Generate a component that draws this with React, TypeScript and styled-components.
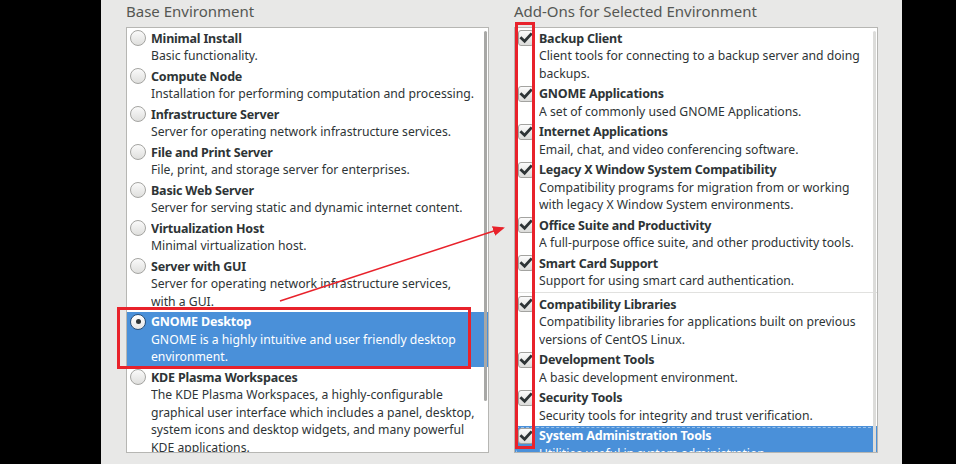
import React from 'react';
import styled, {createGlobalStyle} from 'styled-components';

const GlobalStyle = createGlobalStyle`
  html, body {
    margin: 0;
    padding: 0;
    background: #000;
  }
  #root {
    width: 956px;
    height: 464px;
  }
`

type Entry = {
    name: string
    lines: string[]
    selected?: boolean
    separatorBefore?: boolean
}

const environments: Entry[] = [
    {name: 'Minimal Install', lines: ['Basic functionality.']},
    {name: 'Compute Node', lines: ['Installation for performing computation and processing.']},
    {name: 'Infrastructure Server', lines: ['Server for operating network infrastructure services.']},
    {name: 'File and Print Server', lines: ['File, print, and storage server for enterprises.']},
    {name: 'Basic Web Server', lines: ['Server for serving static and dynamic internet content.']},
    {name: 'Virtualization Host', lines: ['Minimal virtualization host.']},
    {name: 'Server with GUI', lines: ['Server for operating network infrastructure services,', 'with a GUI.']},
    {
        name: 'GNOME Desktop',
        lines: ['GNOME is a highly intuitive and user friendly desktop', 'environment.'],
        selected: true
    },
    {
        name: 'KDE Plasma Workspaces',
        lines: [
            'The KDE Plasma Workspaces, a highly-configurable',
            'graphical user interface which includes a panel, desktop,',
            'system icons and desktop widgets, and many powerful',
            'KDE applications.'
        ]
    },
]

const addons: Entry[] = [
    {name: 'Backup Client', lines: ['Client tools for connecting to a backup server and doing', 'backups.']},
    {name: 'GNOME Applications', lines: ['A set of commonly used GNOME Applications.']},
    {name: 'Internet Applications', lines: ['Email, chat, and video conferencing software.']},
    {
        name: 'Legacy X Window System Compatibility',
        lines: ['Compatibility programs for migration from or working', 'with legacy X Window System environments.']
    },
    {name: 'Office Suite and Productivity', lines: ['A full-purpose office suite, and other productivity tools.']},
    {name: 'Smart Card Support', lines: ['Support for using smart card authentication.']},
    {
        name: 'Compatibility Libraries',
        lines: ['Compatibility libraries for applications built on previous', 'versions of CentOS Linux.'],
        separatorBefore: true
    },
    {name: 'Development Tools', lines: ['A basic development environment.']},
    {name: 'Security Tools', lines: ['Security tools for integrity and trust verification.']},
    {name: 'System Administration Tools', lines: ['Utilities useful in system administration.'], selected: true},
]

export default function App() {
    return (
        <>
            <GlobalStyle/>
            <Screen>
                <Workspace>
                    <Column $width={363}>
                        <Heading>Base Environment</Heading>
                        <ListBox>
                            {environments.map(e => (
                                <Item key={e.name} $selected={e.selected}>
                                    <IconSlot>
                                        <Radio $checked={e.selected}/>
                                    </IconSlot>
                                    <ItemText>
                                        <ItemName>{e.name}</ItemName>
                                        {e.lines.map(l => <ItemLine key={l}>{l}</ItemLine>)}
                                    </ItemText>
                                </Item>
                            ))}
                            <Thumb $top={3} $height={370} $color="#a8a8a6"/>
                        </ListBox>
                    </Column>
                    <Column $width={364}>
                        <Heading>Add-Ons for Selected Environment</Heading>
                        <ListBox>
                            {addons.map(a => (
                                <React.Fragment key={a.name}>
                                    {a.separatorBefore && <Separator/>}
                                    <Item $selected={a.selected} $focused={a.selected}>
                                        <IconSlot>
                                            <CheckBox/>
                                        </IconSlot>
                                        <ItemText>
                                            <ItemName>{a.name}</ItemName>
                                            {a.lines.map(l => <ItemLine key={l}>{l}</ItemLine>)}
                                        </ItemText>
                                    </Item>
                                </React.Fragment>
                            ))}
                            <Thumb $top={3} $height={430} $color="#dcdcda"/>
                        </ListBox>
                    </Column>
                </Workspace>
                <Annotations width="956" height="464" viewBox="0 0 956 464">
                    <defs>
                        <marker id="head" markerWidth="12" markerHeight="10" refX="10" refY="5" orient="auto"
                                markerUnits="userSpaceOnUse">
                            <path d="M0,0 L12,5 L0,10 z" fill="#e8222b"/>
                        </marker>
                    </defs>
                    <rect x="118.5" y="308.5" width="351" height="59" fill="none" stroke="#e8222b" strokeWidth="3"/>
                    <rect x="516.5" y="23.5" width="17" height="424" fill="none" stroke="#e8222b" strokeWidth="3"/>
                    <line x1="280" y1="301" x2="503" y2="228" stroke="#e8222b" strokeWidth="1.5"
                          markerEnd="url(#head)"/>
                </Annotations>
            </Screen>
        </>
    )
}

function CheckBox() {
    return (
        <CheckFrame>
            <svg width="14" height="14" viewBox="0 0 14 14">
                <path d="M2.4 7.2 L5.6 10.3 L11.8 3.4" fill="none" stroke="#2e3436" strokeWidth="2.8"
                      strokeLinecap="square" strokeLinejoin="miter"/>
            </svg>
        </CheckFrame>
    )
}

const Screen = styled.div`
  position: relative;
  width: 956px;
  height: 464px;
  background: #000;
  display: flex;
  overflow: hidden;
  font-family: "Noto Sans", "DejaVu Sans", sans-serif;
`

const Workspace = styled.div`
  margin-left: 101px;
  width: 801px;
  box-sizing: border-box;
  height: 464px;
  background: #e8e8e7;
  padding: 0 24px 0 25px;
  display: flex;
  gap: 25px;
`

const Column = styled.div<{ $width: number }>`
  display: flex;
  flex-direction: column;
  flex: none;
  width: ${p => p.$width}px;
`

const Heading = styled.div`
  height: 27px;
  line-height: 22px;
  font-size: 15px;
  color: #555753;
`

const ListBox = styled.div`
  position: relative;
  height: 426px;
  box-sizing: border-box;
  border: 1px solid #b6b6b3;
  background: #fff;
  overflow: hidden;
`

const Item = styled.div<{ $selected?: boolean, $focused?: boolean }>`
  display: flex;
  gap: 5px;
  padding: 1.5px 0 1.5px 3px;
  background: ${p => p.$selected ? '#4a90d9' : 'transparent'};
  color: ${p => p.$selected ? '#ffffff' : '#2e3436'};
  outline: ${p => p.$focused ? '1px dashed rgba(255,255,255,0.45)' : 'none'};
  outline-offset: -2px;
`

const IconSlot = styled.div`
  flex: none;
  width: 16px;
  height: 17.5px;
  display: flex;
  align-items: center;
  justify-content: center;
`

const Radio = styled.span<{ $checked?: boolean }>`
  box-sizing: border-box;
  width: 16px;
  height: 16px;
  border-radius: 50%;
  border: 1px solid ${p => p.$checked ? '#2b4f77' : '#a4a4a1'};
  background: ${p => p.$checked ? 'linear-gradient(#ffffff, #e6e6e6)' : 'linear-gradient(#fafafa, #dfdfdd)'};
  display: flex;
  align-items: center;
  justify-content: center;

  &::after {
    content: '';
    display: ${p => p.$checked ? 'block' : 'none'};
    width: 5px;
    height: 5px;
    border-radius: 50%;
    background: #2e3436;
  }
`

const CheckFrame = styled.span`
  box-sizing: border-box;
  width: 16px;
  height: 16px;
  border-radius: 3px;
  border: 1px solid #a3a3a0;
  background: linear-gradient(#fbfbfb, #dcdcda);
  display: flex;
  align-items: center;
  justify-content: center;
`

const ItemText = styled.div`
  display: flex;
  flex-direction: column;
  min-width: 0;
  overflow: hidden;
  white-space: nowrap;
  font-size: 12.2px;
  line-height: 17.5px;
`

const ItemName = styled.div`
  font-weight: bold;
  font-size: 12.5px;
  letter-spacing: -0.2px;
`

const ItemLine = styled.div``

const Separator = styled.div`
  height: 1px;
  margin: 1px 0;
  background: #e1e1df;
`

const Thumb = styled.div<{ $top: number, $height: number, $color: string }>`
  position: absolute;
  right: 1px;
  top: ${p => p.$top}px;
  width: 3px;
  height: ${p => p.$height}px;
  border-radius: 2px;
  background: ${p => p.$color};
`

const Annotations = styled.svg`
  position: absolute;
  left: 0;
  top: 0;
  pointer-events: none;
`
